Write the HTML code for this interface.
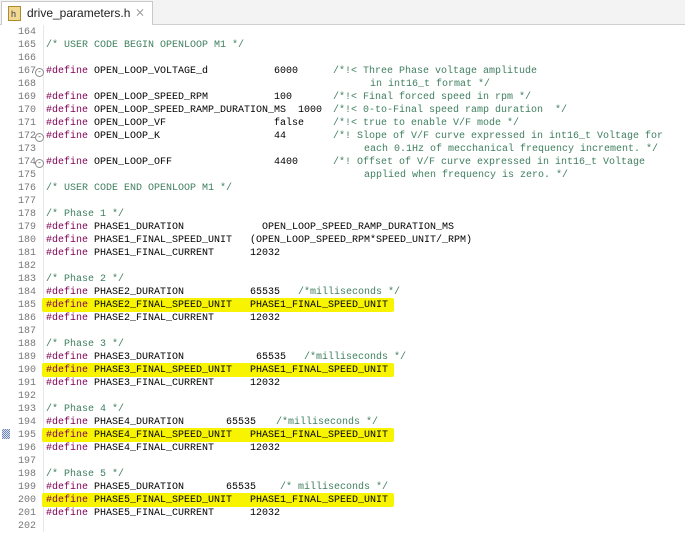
<!DOCTYPE html>
<html><head><meta charset="utf-8"><style>
body{margin:0;width:685px;height:532px;overflow:hidden;background:#fff;font-family:"Liberation Mono",monospace;font-size:10px;position:relative}
.tabbar{position:absolute;left:0;top:0;width:685px;height:24px;background:#f3f3f3;border-bottom:1px solid #d0d0d0}
.tab{position:absolute;left:1px;top:1px;width:150px;height:23px;background:#fff;border:1px solid #c8c8c8;border-bottom:none;font-family:"Liberation Sans",sans-serif;font-size:12px}
.l{position:absolute;left:0;height:13px;line-height:13px;width:685px;white-space:pre}
.l span{position:absolute;top:0}
.n{color:#787878;left:0;width:36px;text-align:right}
.k{color:#7f0055}
.c{color:#3f7f5f}
.hl{position:absolute;left:42px;width:352px;height:14px;background:#f8f400;border-radius:2px}
</style></head><body>
<div class="tabbar"><div class="tab">
<div style="position:absolute;left:6px;top:4px;width:11px;height:13px;background:#f0d890;border:1px solid #b08a30"></div>
<div style="position:absolute;left:9px;top:7px;font-size:9px;color:#335">h</div>
<span style="position:absolute;left:25px;top:4px;color:#222">drive_parameters.h</span>
<span style="position:absolute;left:133px;top:3px;color:#999;font-size:12px">⨯</span>
</div></div>
<div style="position:absolute;left:43px;top:25px;width:1px;height:507px;background:#e8e8e8"></div>
<div class="hl" style="top:298px"></div>
<div class="hl" style="top:363px"></div>
<div class="hl" style="top:428px"></div>
<div class="hl" style="top:493px"></div>
<div style="position:absolute;left:2px;top:429px;width:8px;height:10px;background:repeating-conic-gradient(#6a8ab8 0 25%,#dde 0 50%) 0 0/2px 2px"></div>
<div id="c"></div>
<script>
const L={
164:[],165:[[46,'c','/* USER CODE BEGIN OPENLOOP M1 */']],
167:[[46,'k','#define'],[94,'','OPEN_LOOP_VOLTAGE_d'],[274,'','6000'],[333,'c','/*!< Three Phase voltage amplitude']],
168:[[370,'c','in int16_t format */']],
169:[[46,'k','#define'],[94,'','OPEN_LOOP_SPEED_RPM'],[274,'','100'],[333,'c','/*!< Final forced speed in rpm */']],
170:[[46,'k','#define'],[94,'','OPEN_LOOP_SPEED_RAMP_DURATION_MS'],[298,'','1000'],[333,'c','/*!< 0-to-Final speed ramp duration  */']],
171:[[46,'k','#define'],[94,'','OPEN_LOOP_VF'],[274,'','false'],[333,'c','/*!< true to enable V/F mode */']],
172:[[46,'k','#define'],[94,'','OPEN_LOOP_K'],[274,'','44'],[333,'c','/*! Slope of V/F curve expressed in int16_t Voltage for']],
173:[[364,'c','each 0.1Hz of mecchanical frequency increment. */']],
174:[[46,'k','#define'],[94,'','OPEN_LOOP_OFF'],[274,'','4400'],[333,'c','/*! Offset of V/F curve expressed in int16_t Voltage']],
175:[[364,'c','applied when frequency is zero. */']],
176:[[46,'c','/* USER CODE END OPENLOOP M1 */']],
178:[[46,'c','/* Phase 1 */']],
179:[[46,'k','#define'],[94,'','PHASE1_DURATION'],[262,'','OPEN_LOOP_SPEED_RAMP_DURATION_MS']],
180:[[46,'k','#define'],[94,'','PHASE1_FINAL_SPEED_UNIT'],[250,'','(OPEN_LOOP_SPEED_RPM*SPEED_UNIT/_RPM)']],
181:[[46,'k','#define'],[94,'','PHASE1_FINAL_CURRENT'],[250,'','12032']],
183:[[46,'c','/* Phase 2 */']],
184:[[46,'k','#define'],[94,'','PHASE2_DURATION'],[250,'','65535'],[298,'c','/*milliseconds */']],
185:[[46,'k','#define'],[94,'','PHASE2_FINAL_SPEED_UNIT'],[250,'','PHASE1_FINAL_SPEED_UNIT']],
186:[[46,'k','#define'],[94,'','PHASE2_FINAL_CURRENT'],[250,'','12032']],
188:[[46,'c','/* Phase 3 */']],
189:[[46,'k','#define'],[94,'','PHASE3_DURATION'],[256,'','65535'],[304,'c','/*milliseconds */']],
190:[[46,'k','#define'],[94,'','PHASE3_FINAL_SPEED_UNIT'],[250,'','PHASE1_FINAL_SPEED_UNIT']],
191:[[46,'k','#define'],[94,'','PHASE3_FINAL_CURRENT'],[250,'','12032']],
193:[[46,'c','/* Phase 4 */']],
194:[[46,'k','#define'],[94,'','PHASE4_DURATION'],[226,'','65535'],[276,'c','/*milliseconds */']],
195:[[46,'k','#define'],[94,'','PHASE4_FINAL_SPEED_UNIT'],[250,'','PHASE1_FINAL_SPEED_UNIT']],
196:[[46,'k','#define'],[94,'','PHASE4_FINAL_CURRENT'],[250,'','12032']],
198:[[46,'c','/* Phase 5 */']],
199:[[46,'k','#define'],[94,'','PHASE5_DURATION'],[226,'','65535'],[280,'c','/* milliseconds */']],
200:[[46,'k','#define'],[94,'','PHASE5_FINAL_SPEED_UNIT'],[250,'','PHASE1_FINAL_SPEED_UNIT']],
201:[[46,'k','#define'],[94,'','PHASE5_FINAL_CURRENT'],[250,'','12032']],
};
let h='';
for(let i=164;i<=202;i++){
 const t=26+13*(i-164);
 h+=`<div class="l" style="top:${t}px"><span class="n">${i}</span>`;
 if(i==167||i==172||i==174)h+=`<span style="left:35px;top:3px;width:7px;height:7px;border:1px solid #8a8a8a;border-radius:50%;font-size:8px;line-height:7px;text-align:center;color:#555;background:#fff">-</span>`;
 for(const s of (L[i]||[]))h+=`<span class="${s[1]}" style="left:${s[0]}px">${s[2]}</span>`;
 h+='</div>';
}
document.getElementById('c').innerHTML=h;
</script>
</body></html>
